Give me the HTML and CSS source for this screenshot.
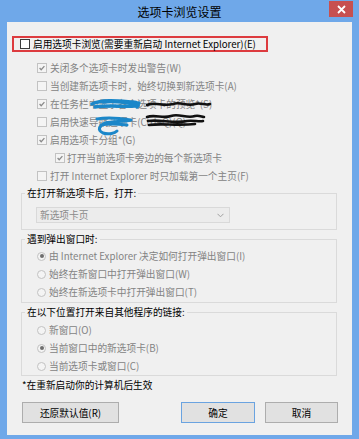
FILE: index.html
```html
<!DOCTYPE html>
<html lang="zh-CN">
<head>
    <meta charset="utf-8"/>
    <title>选项卡浏览设置</title>
<link rel="stylesheet" href="styles.css">
</head>
<body>
    <div class="window" role="dialog" aria-labelledby="dlg-title">
        <div class="titlebar">
            <span class="title" id="dlg-title">选项卡浏览设置</span>
            <span class="close" aria-label="关闭">
                <svg width="9" height="9" viewBox="0 0 9 9"><path d="M1 1 L8 8 M8 1 L1 8"/></svg>
            </span>
        </div>

        <div class="client">
            <div class="highlight">
                <label class="check"><span class="box"></span>启用选项卡浏览(需要重新启动 Internet Explorer)(E)</label>
            </div>

            <ul class="options">
                <li class="opt lvl1"><span class="box on"><svg viewBox="0 0 10 10"><path d="M2 5 L4 7.2 L8 2.6"/></svg></span>关闭多个选项卡时发出警告(W)</li>
                <li class="opt lvl1"><span class="box"></span>当创建新选项卡时，始终切换到新选项卡(A)</li>
                <li class="opt lvl1"><span class="box on"><svg viewBox="0 0 10 10"><path d="M2 5 L4 7.2 L8 2.6"/></svg></span>在任务栏中显示各个选项卡的预览*(S)</li>
                <li class="opt lvl1"><span class="box"></span>启用快速导航选项卡(Ctrl+Q)(Q)</li>
                <li class="opt lvl1"><span class="box on"><svg viewBox="0 0 10 10"><path d="M2 5 L4 7.2 L8 2.6"/></svg></span>启用选项卡分组*(G)</li>
                <li class="opt lvl2"><span class="box on"><svg viewBox="0 0 10 10"><path d="M2 5 L4 7.2 L8 2.6"/></svg></span>打开当前选项卡旁边的每个新选项卡</li>
                <li class="opt lvl1"><span class="box"></span>打开 Internet Explorer 时只加载第一个主页(F)</li>
                <!-- redaction marks from the original capture -->
                <svg class="scribble" width="140" height="80" viewBox="0 0 140 80">
                    <path class="blue" d="M9 45 C20 40 36 42 50 43 C54 43 57 46 54 48 M12 48 C26 46 40 48 52 47 M20 43 C30 41 44 44 56 44"/>
                    <path class="blue thin" d="M14 60 C24 58 36 59 48 61 C40 63 30 62 22 64 C16 67 14 71 20 74 C26 76 32 74 34 72 M18 66 C26 64 36 65 44 66"/>
                    <path class="black" d="M64 46 C72 42 80 48 90 45 C98 42 104 48 112 45 C118 43 122 47 127 45"/>
                    <path class="black" d="M64 58 C72 55 80 60 88 57 C96 54 104 60 112 57 C116 56 119 58 121 58 M65 62 C76 60 92 65 104 62 C110 61 116 63 120 62 M66 66 C78 64 94 67 112 65"/>
                </svg>
            </ul>

            <fieldset class="group first">
                <legend>在打开新选项卡后，打开:</legend>
                <div class="combo">
                    <span>新选项卡页</span>
                    <svg width="7" height="5" viewBox="0 0 7 5"><path d="M0.5 0.8 L3.5 3.8 L6.5 0.8"/></svg>
                </div>
            </fieldset>

            <fieldset class="group second">
                <legend>遇到弹出窗口时:</legend>
                <ul class="radios">
                    <li class="opt"><span class="radio on"></span>由 Internet Explorer 决定如何打开弹出窗口(I)</li>
                    <li class="opt"><span class="radio"></span>始终在新窗口中打开弹出窗口(W)</li>
                    <li class="opt"><span class="radio"></span>始终在新选项卡中打开弹出窗口(T)</li>
                </ul>
            </fieldset>

            <fieldset class="group third">
                <legend>在以下位置打开来自其他程序的链接:</legend>
                <ul class="radios">
                    <li class="opt"><span class="radio"></span>新窗口(O)</li>
                    <li class="opt"><span class="radio on"></span>当前窗口中的新选项卡(B)</li>
                    <li class="opt"><span class="radio"></span>当前选项卡或窗口(C)</li>
                </ul>
            </fieldset>

            <p class="note">*在重新启动你的计算机后生效</p>

            <div class="buttons">
                <button class="btn reset">还原默认值(R)</button>
                <button class="btn ok">确定</button>
                <button class="btn cancel">取消</button>
            </div>
        </div>
    </div>
</body>
</html>
```
FILE: styles.css
```css
body {
    margin: 0;
    font-family: "Noto Sans CJK SC", "Noto Sans", sans-serif;
    font-size: 9.7px;
    color: #000;
}

.window {
    width: 359px;
    height: 439px;
    box-sizing: border-box;
    padding: 0 7px 4px 7px;
    background: #6fa8e9;
    display: flex;
    flex-direction: column;
}

.titlebar {
    height: 22px;
    flex: none;
    display: grid;
    grid-template-columns: 1fr auto 1fr;
    align-items: start;
}
.title {
    grid-column: 2;
    font-size: 12px;
    line-height: 24px;
}
.close {
    grid-column: 3;
    justify-self: end;
    width: 24px;
    height: 16px;
    margin: 1px -1px 0 0;
    background: #c75050;
    display: flex;
    align-items: center;
    justify-content: center;
}
.close path {
    stroke: #fff;
    stroke-width: 1.8;
    fill: none;
}

.client {
    flex: 1;
    background: #f0f0f0;
    display: flex;
    flex-direction: column;
}

/* checkboxes */
.check,
.opt {
    display: flex;
    align-items: center;
    gap: 3px;
    white-space: nowrap;
}
.box {
    flex: none;
    width: 10px;
    height: 10px;
    box-sizing: border-box;
    border: 1px solid #3c3c3c;
    background: #fff;
    display: flex;
}
.box svg {
    width: 8px;
    height: 8px;
}
.box path {
    fill: none;
    stroke: #8a8a8a;
    stroke-width: 1.6;
}

.highlight {
    margin: 14px 0 0 5px;
    width: 256px;
    height: 16px;
    box-sizing: border-box;
    border: 2px solid #dd3b3f;
    padding-left: 6px;
    display: flex;
    align-items: center;
}

.options {
    position: relative;
    list-style: none;
    margin: 7px 0 0 0;
    padding: 0;
}
.options .opt {
    height: 18px;
    color: #838383;
}
.options .box {
    border-color: #c2c2c2;
    background: #f4f4f4;
}
.lvl1 { padding-left: 30px; }
.lvl2 { padding-left: 48px; gap: 2px; }

.scribble {
    position: absolute;
    left: 76px;
    top: 0;
}
.scribble path {
    fill: none;
    stroke-linecap: round;
    stroke-linejoin: round;
}
.scribble .blue {
    stroke: #1b87c9;
    stroke-width: 3.5;
}
.scribble .blue.thin {
    stroke-width: 3;
}
.scribble .black {
    stroke: #111;
    stroke-width: 2.6;
}

/* group boxes */
.group {
    margin: 0 15px 0 14px;
    padding: 0;
    border: 1px solid #dadada;
    min-width: 0;
}
.group legend {
    margin-left: 3px;
    padding: 0 2px;
    line-height: 14px;
}
.first { margin-top: 1px; }
.second { margin-top: 2px; }
.third { margin-top: 2px; }

.combo {
    margin: 7px 0 6px 14px;
    width: 194px;
    height: 16px;
    box-sizing: border-box;
    border: 1px solid #d9d9d9;
    background: #ececec;
    color: #8a8a8a;
    padding: 0 5px 0 3px;
    display: flex;
    align-items: center;
    justify-content: space-between;
}
.combo path {
    fill: none;
    stroke: #a0a0a0;
    stroke-width: 1;
}

.radios {
    list-style: none;
    margin: 1px 0 1px 0;
    padding: 0 0 0 15px;
}
.third .radios {
    margin: 2px 0 0 0;
}
.radios .opt {
    height: 18px;
    color: #838383;
}
.radio {
    flex: none;
    width: 9px;
    height: 9px;
    box-sizing: border-box;
    border: 1px solid #c2c2c2;
    border-radius: 50%;
    background: #f4f4f4;
    display: flex;
    align-items: center;
    justify-content: center;
}
.radio.on::after {
    content: "";
    width: 4px;
    height: 4px;
    border-radius: 50%;
    background: #6e6e6e;
}

.note {
    margin: 2px 0 0 15px;
    line-height: 14px;
}

.buttons {
    margin: 10px 14px 0 15px;
    display: flex;
    gap: 10px;
}
.btn {
    height: 21px;
    padding: 0;
    font: inherit;
    color: #000;
    background: #e1e1e1;
    border: 1px solid #adadad;
}
.reset { width: 97px; margin-right: auto; }
.ok {
    width: 74px;
    border-color: #6aa3e0;
}
.cancel { width: 73px; }
```
